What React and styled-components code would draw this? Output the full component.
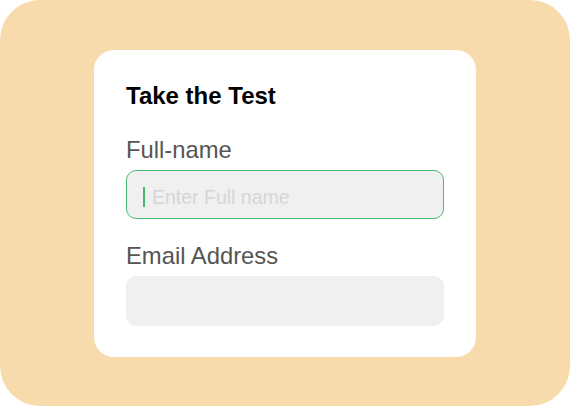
import React from "react";
import styled, { createGlobalStyle } from "styled-components";

const Global = createGlobalStyle`
  html, body { margin: 0; padding: 0; background: #ffffff; }
  body { font-family: "Liberation Sans", Arial, sans-serif; }
  * { box-sizing: border-box; }
`;

const Frame = styled.div`
  width: 570px;
  height: 406px;
  background: #f8dbac;
  border-radius: 40px;
  display: flex;
  align-items: flex-start;
  justify-content: center;
  padding-top: 50px;
`;

const Card = styled.div`
  width: 382px;
  height: 307px;
  background: #ffffff;
  border-radius: 20px;
  padding: 32px 32px 0 32px;
  display: flex;
  flex-direction: column;
`;

const Title = styled.h1`
  margin: 0;
  font-size: 24px;
  line-height: 28px;
  font-weight: 700;
  color: #000;
`;

const Label = styled.label`
  display: block;
  margin-top: ${(p) => p.$top}px;
  font-size: 23.8px;
  line-height: 28px;
  color: #555555;
`;

const Field = styled.div`
  margin-top: 6px;
  height: ${(p) => p.$h}px;
  background: #f0f0f0;
  border-radius: 10px;
  border: 1px solid ${(p) => (p.$focus ? "#4cbb74" : "#f0f0f0")};
  display: flex;
  align-items: center;
  padding: 5px 0 0 16px;
`;

const Caret = styled.span`
  width: 2px;
  height: 20px;
  background: #45b86c;
  margin-right: 7px;
`;

const Placeholder = styled.span`
  font-size: 19.5px;
  line-height: 22px;
  color: #d6d6d6;
`;

export default function App() {
  return (
    <>
      <Global />
      <Frame>
        <Card>
          <Title>Take the Test</Title>
          <Label $top={26}>Full-name</Label>
          <Field $h={49} $focus>
            <Caret />
            <Placeholder>Enter Full name</Placeholder>
          </Field>
          <Label $top={23}>Email Address</Label>
          <Field $h={50} />
        </Card>
      </Frame>
    </>
  );
}
